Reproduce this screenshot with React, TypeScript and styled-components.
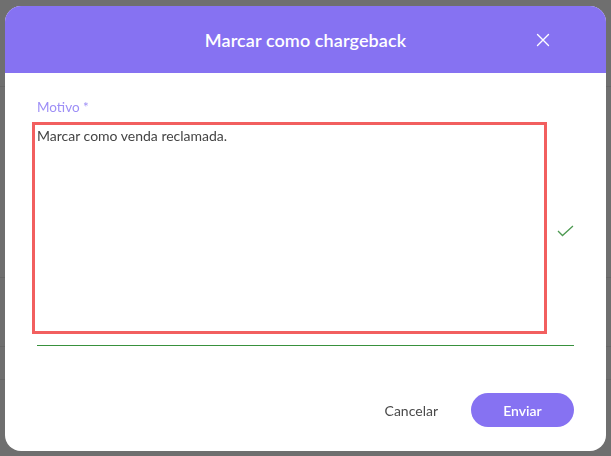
import React from "react";
import styled, { createGlobalStyle } from "styled-components";

const GlobalStyle = createGlobalStyle`
  html, body {
    margin: 0;
    padding: 0;
    height: 100%;
    overflow: hidden;
  }
  body {
    font-family: Lato, "Noto Sans", "Liberation Sans", sans-serif;
  }
  #root {
    height: 100%;
  }
`;

const Page = styled.div`
  height: 100%;
  background: #6f6f6f;
  display: flex;
  flex-direction: column;
`;

const PageRow = styled.div<{ h: number }>`
  height: ${(p) => p.h}px;
  border-bottom: 1px solid #666666;
  flex-shrink: 0;
`;

const Overlay = styled.div`
  position: fixed;
  inset: 0;
  padding-top: 6px;
  display: flex;
  align-items: flex-start;
  justify-content: center;
`;

const Modal = styled.div`
  width: 601px;
  height: 445px;
  background: #ffffff;
  border-radius: 16px;
  overflow: hidden;
  display: flex;
  flex-direction: column;
`;

const Header = styled.div`
  height: 67px;
  flex-shrink: 0;
  background: #8672f2;
  display: flex;
  align-items: center;
  justify-content: center;
  position: relative;
`;

const Title = styled.h2`
  margin: 0;
  color: #ffffff;
  font-size: 18px;
  font-weight: 600;
  letter-spacing: 0.1px;
`;

const CloseButton = styled.button`
  position: absolute;
  right: 56px;
  top: 27px;
  width: 14px;
  height: 14px;
  padding: 0;
  border: none;
  background: transparent;
  cursor: pointer;
  display: flex;
`;

const Body = styled.div`
  flex: 1;
  padding: 26px 32px 0 27px;
  display: flex;
  flex-direction: column;
`;

const Label = styled.label`
  margin-left: 5px;
  color: #9d8ef6;
  font-size: 13.5px;
  line-height: 16px;
  margin-bottom: 7px;
`;

const FieldRow = styled.div`
  display: flex;
  align-items: center;
  height: 212px;
`;

const TextArea = styled.textarea`
  display: block;
  width: 516px;
  height: 212px;
  box-sizing: border-box;
  border: 3px solid #f25f5f;
  border-radius: 0;
  padding: 2px 2px;
  resize: none;
  outline: none;
  font-family: Lato, "Noto Sans", "Liberation Sans", sans-serif;
  font-size: 14px;
  line-height: 17px;
  color: #444444;
`;

const CheckIcon = styled.svg`
  margin-left: 10px;
  margin-top: 6px;
`;

const Underline = styled.div`
  margin: 11px 0 0 5px;
  height: 1px;
  background: #38913d;
`;

const Footer = styled.div`
  margin-top: auto;
  padding: 0 32px 24px;
  display: flex;
  justify-content: flex-end;
  align-items: center;
  gap: 33px;
`;

const TextButton = styled.button`
  border: none;
  background: transparent;
  font-family: Lato, "Noto Sans", "Liberation Sans", sans-serif;
  font-size: 14px;
  color: #4a4a4a;
  padding: 0;
  cursor: pointer;
`;

const PrimaryButton = styled.button`
  width: 103px;
  height: 34px;
  border: none;
  border-radius: 17px;
  background: #8672f2;
  color: #ffffff;
  font-family: Lato, "Noto Sans", "Liberation Sans", sans-serif;
  font-size: 14px;
  font-weight: 600;
  cursor: pointer;
`;

export default function App() {
  return (
    <>
      <GlobalStyle />
      <Page>
        <PageRow h={86} />
        <PageRow h={190} />
        <PageRow h={68} />
        <PageRow h={32} />
      </Page>
      <Overlay>
        <Modal>
          <Header>
            <Title>Marcar como chargeback</Title>
            <CloseButton aria-label="Fechar">
              <svg width="14" height="14" viewBox="0 0 14 14">
                <path
                  d="M1.5 1.5 L12.5 12.5 M12.5 1.5 L1.5 12.5"
                  stroke="#ffffff"
                  strokeWidth="1.4"
                  strokeLinecap="round"
                />
              </svg>
            </CloseButton>
          </Header>
          <Body>
            <Label>Motivo *</Label>
            <FieldRow>
              <TextArea defaultValue="Marcar como venda reclamada." />
              <CheckIcon width="17" height="12" viewBox="0 0 17 12">
                <path
                  d="M1 6 L5.5 10.5 L16 1"
                  fill="none"
                  stroke="#4e9a52"
                  strokeWidth="1.3"
                />
              </CheckIcon>
            </FieldRow>
            <Underline />
          </Body>
          <Footer>
            <TextButton>Cancelar</TextButton>
            <PrimaryButton>Enviar</PrimaryButton>
          </Footer>
        </Modal>
      </Overlay>
    </>
  );
}
